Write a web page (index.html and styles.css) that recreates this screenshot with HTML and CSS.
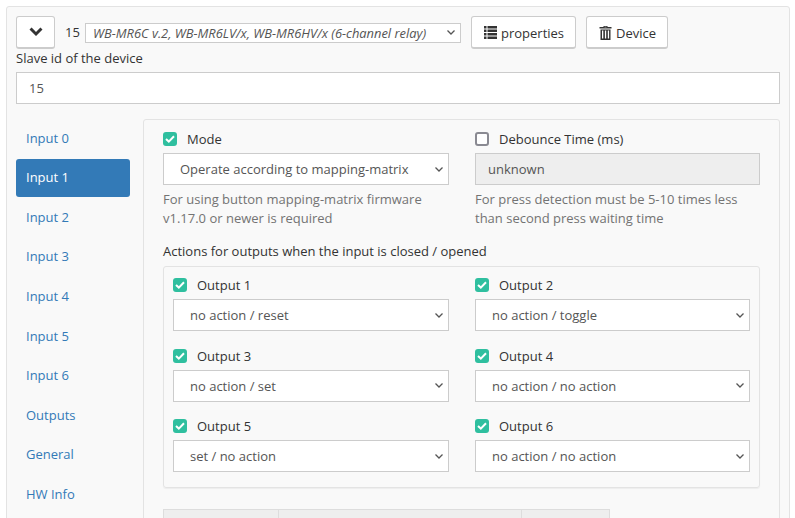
FILE: index.html
```html
<!DOCTYPE html>
<html lang="en">
<head>
    <meta charset="UTF-8">
    <title>Device settings</title>
    <link rel="stylesheet" href="styles.css">
</head>
<body>
    <div class="device-panel">
        <div class="device-head">
            <button class="btn btn-toggle" type="button">
                <svg width="14" height="10" viewBox="0 0 14 10"><path d="M0.5 2.6 L2.6 0.5 L7 4.9 L11.4 0.5 L13.5 2.6 L7 9.1 Z" fill="#333"/></svg>
            </button>
            <span class="device-id">15</span>
            <select class="device-type">
                <option>WB-MR6C v.2, WB-MR6LV/x, WB-MR6HV/x (6-channel relay)</option>
            </select>
            <button class="btn" type="button">
                <svg width="13" height="13" viewBox="0 0 13 13"><path d="M0 0h2.5v2.5H0zM3.5 0H13v2.5H3.5zM0 3.5h2.5V6H0zM3.5 3.5H13V6H3.5zM0 7h2.5v2.5H0zM3.5 7H13v2.5H3.5zM0 10.5h2.5V13H0zM3.5 10.5H13V13H3.5z" fill="#333"/></svg>
                properties
            </button>
            <button class="btn btn-device" type="button">
                <svg width="13" height="14" viewBox="0 0 13 14"><path d="M4.5 0h4v1h4v1.5H.5V1h4zM5.5.8v.4h2V.8zM1.5 3.4h10V14h-10zM3 4.6v8h1.3v-8zM5.9 4.6v8h1.3v-8zM8.8 4.6v8h1.3v-8z" fill="#333" fill-rule="evenodd"/></svg>
                Device
            </button>
        </div>

        <label class="slave-label">Slave id of the device</label>
        <input class="form-control" type="text" value="15">

        <div class="device-body">
            <ul class="side-nav">
                <li><a href="#">Input 0</a></li>
                <li class="active"><a href="#">Input 1</a></li>
                <li><a href="#">Input 2</a></li>
                <li><a href="#">Input 3</a></li>
                <li><a href="#">Input 4</a></li>
                <li><a href="#">Input 5</a></li>
                <li><a href="#">Input 6</a></li>
                <li><a href="#">Outputs</a></li>
                <li><a href="#">General</a></li>
                <li><a href="#">HW Info</a></li>
            </ul>

            <div class="input-panel">
                <div class="two-cols">
                    <div class="field">
                        <div class="check-row">
                            <span class="check on"><svg width="10" height="8" viewBox="0 0 10 8"><path d="M1 4 L3.8 6.6 L9 1.2" fill="none" stroke="#fff" stroke-width="2"/></svg></span>
                            <span>Mode</span>
                        </div>
                        <select class="form-control">
                            <option>Operate according to mapping-matrix</option>
                        </select>
                        <p class="help">For using button mapping-matrix firmware v1.17.0 or newer is required</p>
                    </div>
                    <div class="field">
                        <div class="check-row">
                            <span class="check"></span>
                            <span>Debounce Time (ms)</span>
                        </div>
                        <input class="form-control" type="text" value="unknown" disabled>
                        <p class="help">For press detection must be 5-10 times less than second press waiting time</p>
                    </div>
                </div>

                <div class="actions-title">Actions for outputs when the input is closed / opened</div>
                <div class="outputs-panel">
                    <div class="output">
                        <div class="check-row">
                            <span class="check on"><svg width="10" height="8" viewBox="0 0 10 8"><path d="M1 4 L3.8 6.6 L9 1.2" fill="none" stroke="#fff" stroke-width="2"/></svg></span>
                            <span>Output 1</span>
                        </div>
                        <select class="form-control"><option>no action / reset</option></select>
                    </div>
                    <div class="output">
                        <div class="check-row">
                            <span class="check on"><svg width="10" height="8" viewBox="0 0 10 8"><path d="M1 4 L3.8 6.6 L9 1.2" fill="none" stroke="#fff" stroke-width="2"/></svg></span>
                            <span>Output 2</span>
                        </div>
                        <select class="form-control"><option>no action / toggle</option></select>
                    </div>
                    <div class="output">
                        <div class="check-row">
                            <span class="check on"><svg width="10" height="8" viewBox="0 0 10 8"><path d="M1 4 L3.8 6.6 L9 1.2" fill="none" stroke="#fff" stroke-width="2"/></svg></span>
                            <span>Output 3</span>
                        </div>
                        <select class="form-control"><option>no action / set</option></select>
                    </div>
                    <div class="output">
                        <div class="check-row">
                            <span class="check on"><svg width="10" height="8" viewBox="0 0 10 8"><path d="M1 4 L3.8 6.6 L9 1.2" fill="none" stroke="#fff" stroke-width="2"/></svg></span>
                            <span>Output 4</span>
                        </div>
                        <select class="form-control"><option>no action / no action</option></select>
                    </div>
                    <div class="output">
                        <div class="check-row">
                            <span class="check on"><svg width="10" height="8" viewBox="0 0 10 8"><path d="M1 4 L3.8 6.6 L9 1.2" fill="none" stroke="#fff" stroke-width="2"/></svg></span>
                            <span>Output 5</span>
                        </div>
                        <select class="form-control"><option>set / no action</option></select>
                    </div>
                    <div class="output">
                        <div class="check-row">
                            <span class="check on"><svg width="10" height="8" viewBox="0 0 10 8"><path d="M1 4 L3.8 6.6 L9 1.2" fill="none" stroke="#fff" stroke-width="2"/></svg></span>
                            <span>Output 6</span>
                        </div>
                        <select class="form-control"><option>no action / no action</option></select>
                    </div>
                </div>

                <div class="matrix-head">
                    <div class="matrix-cell first"></div>
                    <div class="matrix-cell second"></div>
                    <div class="matrix-cell third"></div>
                </div>
            </div>
        </div>
    </div>
</body>
</html>
```

FILE: styles.css
```css
html, body {
    height: 100%;
    overflow: hidden;
}

body {
    margin: 0;
    padding: 6px 5px 0 6px;
    box-sizing: border-box;
    background-color: #fff;
    color: #333;
    font-family: "Open Sans", sans-serif;
    font-size: 13px;
    line-height: 19px;
}

.device-panel {
    height: 600px;
    padding: 9px 9px 0 9px;
    background-color: #f9f9f9;
    border: 1px solid #e3e3e3;
    border-radius: 3px;
}

.device-head {
    display: flex;
    align-items: center;
    height: 33px;
}

.btn {
    display: flex;
    align-items: center;
    gap: 4px;
    height: 33px;
    padding: 1px 11px 0 12px;
    background-color: #fff;
    border: 1px solid #ccc;
    border-bottom-width: 2px;
    border-radius: 3px;
    color: #333;
    font-family: inherit;
    font-size: 13px;
}

.btn-toggle {
    width: 39px;
    justify-content: center;
    padding: 0;
}

.btn-device {
    margin-left: 10px;
}

.device-id {
    margin-left: 10px;
    width: 20px;
}

select {
    appearance: none;
    background-image: url("data:image/svg+xml,%3Csvg xmlns='http://www.w3.org/2000/svg' width='8' height='5'%3E%3Cpath d='M0.5 0.5 L4 4 L7.5 0.5' fill='none' stroke='%23555' stroke-width='1.3'/%3E%3C/svg%3E");
    background-repeat: no-repeat;
    background-position: right 5px center;
}

.device-type {
    width: 376px;
    height: 20px;
    margin-right: 10px;
    padding: 0 20px 0 7px;
    background-color: #fff;
    border: 1px solid #ccc;
    border-radius: 0;
    color: #555;
    font-family: inherit;
    font-size: 12.9px;
    font-style: italic;
}

.slave-label {
    display: block;
    height: 23px;
    line-height: 19px;
}

.form-control {
    display: block;
    width: 100%;
    height: 32px;
    box-sizing: border-box;
    padding: 0 12px;
    background-color: #fff;
    border: 1px solid #ccc;
    border-radius: 0;
    color: #555;
    font-family: inherit;
    font-size: 13px;
}

select.form-control {
    padding: 0 20px 0 16px;
}

.form-control:disabled {
    background-color: #eee;
    opacity: 1;
}

.device-body {
    display: flex;
    margin-top: 15px;
}

.side-nav {
    flex: none;
    width: 114px;
    margin: 0.8px 13px 0 0;
    padding: 0;
    list-style: none;
}

.side-nav li {
    margin-bottom: 1.55px;
}

.side-nav a {
    display: block;
    height: 38px;
    padding: 0 10px;
    border-radius: 3px;
    color: #337ab7;
    line-height: 36px;
    text-decoration: none;
}

.side-nav .active a {
    background-color: #337ab7;
    color: #fff;
}

.input-panel {
    flex: 1;
    padding: 12px 19px 0 19px;
    border: 1px solid #e3e3e3;
    border-radius: 3px;
}

.two-cols {
    display: grid;
    grid-template-columns: 286px 285px;
    column-gap: 26px;
}

.check-row {
    display: flex;
    align-items: center;
    gap: 10px;
    height: 14px;
    margin-bottom: 7px;
}

.check {
    display: flex;
    flex: none;
    align-items: center;
    justify-content: center;
    width: 14px;
    height: 14px;
    box-sizing: border-box;
    background-color: #fff;
    border: 2px solid #8a8a92;
    border-radius: 3px;
}

.check.on {
    background-color: #2fbf9f;
    border: 0;
}

.help {
    margin: 5px 0 0 0;
    color: #737373;
}

.actions-title {
    margin-top: 14px;
    height: 24px;
}

.outputs-panel {
    display: grid;
    grid-template-columns: 276px 275px;
    column-gap: 26px;
    row-gap: 17.5px;
    padding: 11px 9px 15px 9px;
    border: 1px solid #e3e3e3;
    border-radius: 3px;
    box-shadow: 0 1px 1px rgba(0, 0, 0, 0.05);
}

.output .check-row {
    margin-bottom: 7px;
    line-height: 14px;
}

.matrix-head {
    display: flex;
    width: 447px;
    height: 30px;
    margin-top: 21px;
    background-color: #eee;
    border: 1px solid #ddd;
    box-sizing: border-box;
}

.matrix-cell {
    border-right: 1px solid #ddd;
}

.matrix-cell.first {
    width: 114px;
}

.matrix-cell.second {
    width: 242px;
}

.matrix-cell.third {
    flex: 1;
    border-right: 0;
}
```
